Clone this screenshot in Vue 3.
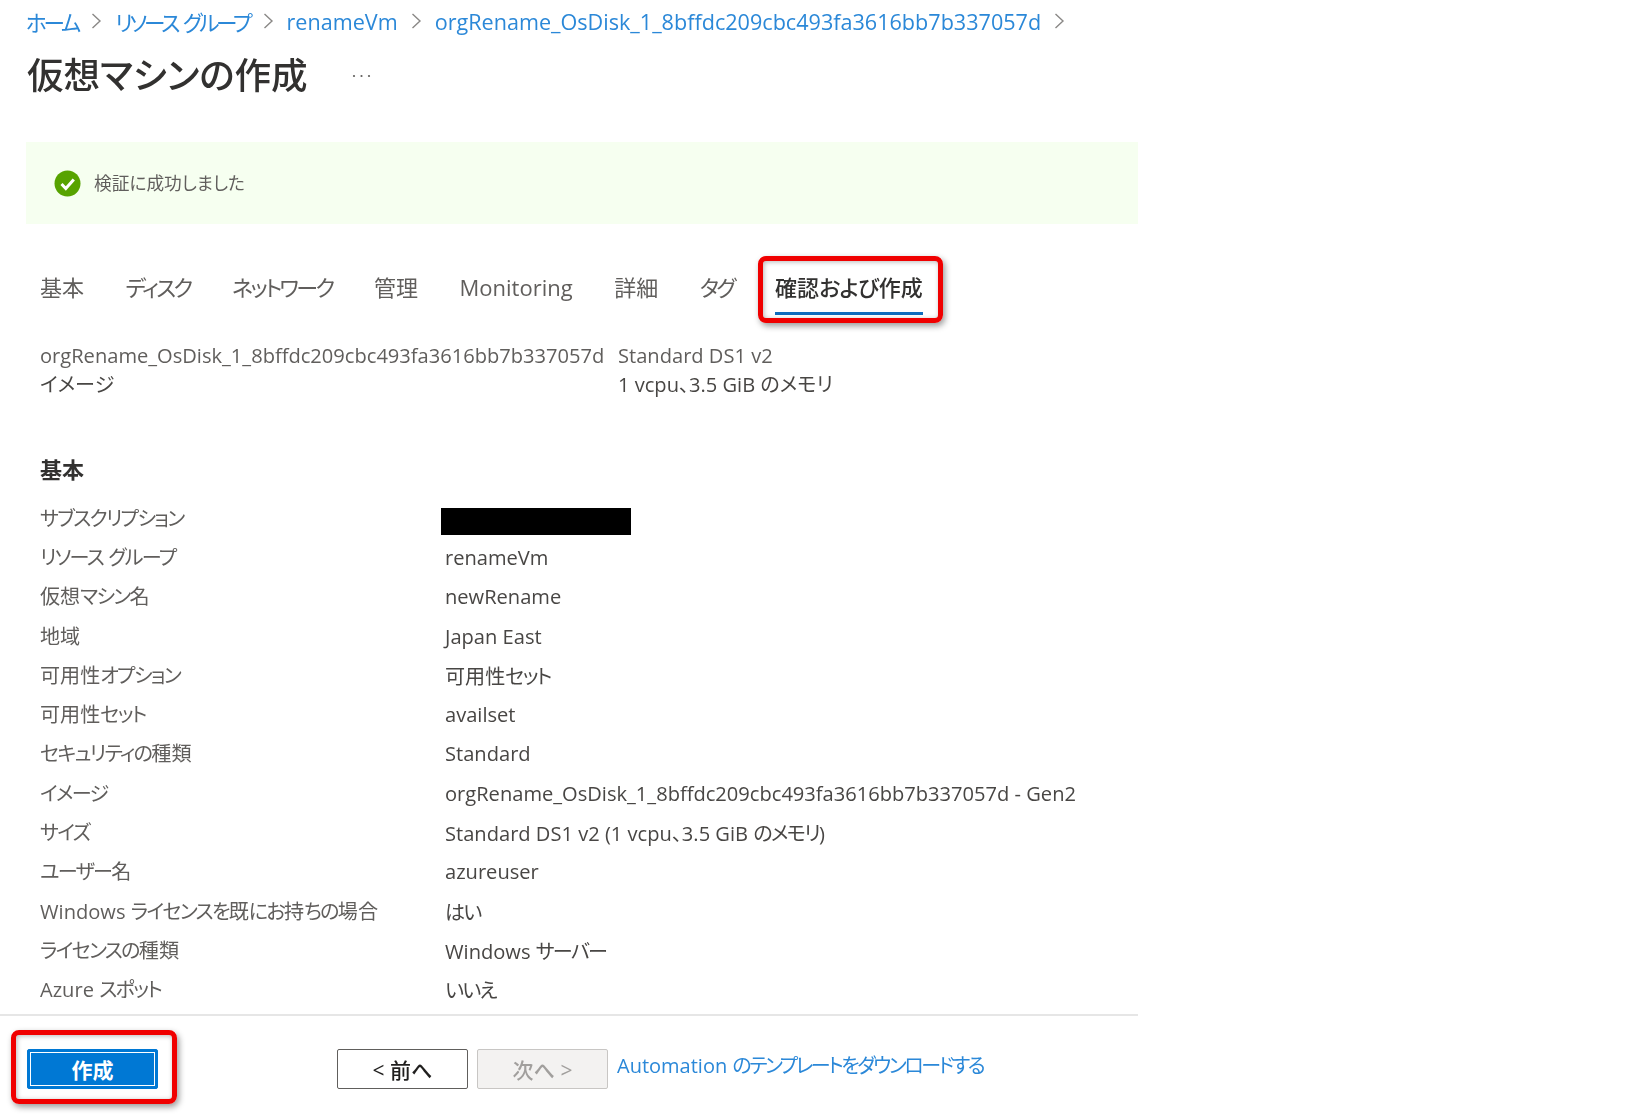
<template>
  <div class="page">
    <nav class="breadcrumb">
      <template v-for="crumb in crumbs" :key="crumb">
        <a class="crumb"><span v-for="r in runs(crumb)" :key="r.text" :class="{ kana: r.kana }">{{ r.text }}</span></a>
        <svg class="chevron" width="11" height="18" viewBox="0 0 11 18">
          <path d="M1.5 2 L9 9 L1.5 16" fill="none" stroke="#8a8886" stroke-width="1.4" />
        </svg>
      </template>
    </nav>

    <div class="title-row">
      <h1 class="title">仮想マシンの作成</h1>
      <svg class="more" width="19" height="4" viewBox="0 0 19 4">
        <circle cx="2" cy="2" r="1.1" fill="#605e5c" />
        <circle cx="9.5" cy="2" r="1.1" fill="#605e5c" />
        <circle cx="17" cy="2" r="1.1" fill="#605e5c" />
      </svg>
    </div>

    <div class="banner">
      <svg class="check" width="27" height="27" viewBox="0 0 27 27">
        <circle cx="13.5" cy="13.5" r="13" fill="#57a300" />
        <path d="M7.5 14 L11.8 18.5 L19.8 9.5" fill="none" stroke="#fff" stroke-width="3" />
      </svg>
      <span>検証に成功しました</span>
    </div>

    <div class="tabs">
      <div v-for="tab in tabs" :key="tab" class="tab" :class="{ active: tab === activeTab }">
        <span v-for="r in runs(tab)" :key="r.text" :class="{ kana: r.kana }">{{ r.text }}</span>
        <div v-if="tab === activeTab" class="callout tab-callout"></div>
      </div>
    </div>

    <div class="summary">
      <div class="summary-col first">
        <div class="muted">orgRename_OsDisk_1_8bffdc209cbc493fa3616bb7b337057d</div>
        <div>イメージ</div>
      </div>
      <div class="summary-col">
        <div class="muted">Standard DS1 v2</div>
        <div>1 vcpu、3.5 GiB のメモリ</div>
      </div>
    </div>

    <h2 class="section">基本</h2>

    <div class="details">
      <div v-for="row in rows" :key="row.label" class="row">
        <div class="label"><span v-for="r in runs(row.label)" :key="r.text" :class="{ kana: r.kana }">{{ r.text }}</span></div>
        <div v-if="row.value" class="value"><span v-for="r in runs(row.value)" :key="r.text" :class="{ kana: r.kana }">{{ r.text }}</span></div>
        <div v-else class="redacted"></div>
      </div>
    </div>

    <footer class="footer">
      <button class="btn primary">
        作成
        <div class="callout btn-callout"></div>
      </button>
      <button class="btn prev">&lt; 前へ</button>
      <button class="btn next">次へ &gt;</button>
      <a class="download"><span v-for="r in runs(downloadLabel)" :key="r.text" :class="{ kana: r.kana }">{{ r.text }}</span></a>
    </footer>
  </div>
</template>

<script setup>
const crumbs = ['ホーム', 'リソース グループ', 'renameVm', 'orgRename_OsDisk_1_8bffdc209cbc493fa3616bb7b337057d']
const tabs = ['基本', 'ディスク', 'ネットワーク', '管理', 'Monitoring', '詳細', 'タグ', '確認および作成']
const activeTab = '確認および作成'
const downloadLabel = 'Automation のテンプレートをダウンロードする'

const rows = [
  { label: 'サブスクリプション', value: '' },
  { label: 'リソース グループ', value: 'renameVm' },
  { label: '仮想マシン名', value: 'newRename' },
  { label: '地域', value: 'Japan East' },
  { label: '可用性オプション', value: '可用性セット' },
  { label: '可用性セット', value: 'availset' },
  { label: 'セキュリティの種類', value: 'Standard' },
  { label: 'イメージ', value: 'orgRename_OsDisk_1_8bffdc209cbc493fa3616bb7b337057d - Gen2' },
  { label: 'サイズ', value: 'Standard DS1 v2 (1 vcpu、3.5 GiB のメモリ)' },
  { label: 'ユーザー名', value: 'azureuser' },
  { label: 'Windows ライセンスを既にお持ちの場合', value: 'はい' },
  { label: 'ライセンスの種類', value: 'Windows サーバー' },
  { label: 'Azure スポット', value: 'いいえ' }
]

// kana runs are set tighter than the rest of the string
const runs = (text) =>
  text.split(/([\u3040-\u30ff]+)/).filter(Boolean).map((t) => ({
    text: t,
    kana: /^[\u3040-\u30ff]/.test(t)
  }))
</script>

<style>
html, body {
  background: #fff;
}
</style>

<style scoped>
.page {
  width: 1138px;
  height: 1114px;
  overflow: visible;
  font-family: "Open Sans", "Noto Sans CJK JP", sans-serif;
  font-feature-settings: "palt";
  font-size: 20.1px;
  color: #484644;
  filter: blur(0.35px);
}

.kana {
  letter-spacing: var(--kana, -0.085em);
}

.breadcrumb {
  --kana: -0.15em;
  display: flex;
  align-items: center;
  height: 42px;
  padding-left: 26px;
  gap: 13px;
  font-size: 21.6px;
}

.crumb {
  color: #2b88d8;
  white-space: nowrap;
}

.title-row {
  display: flex;
  align-items: center;
  height: 62px;
  padding-left: 27px;
}

.title {
  margin: 0;
  font-size: 36.6px;
  font-weight: 500;
  color: #323130;
  white-space: nowrap;
}

.more {
  margin-left: 44px;
  margin-top: 6px;
}

.banner {
  display: flex;
  align-items: center;
  gap: 13px;
  height: 82px;
  margin: 38px 0 0 26px;
  padding-left: 28px;
  background: #f6fff0;
  font-size: 17.7px;
  color: #605e5c;
}

.banner span {
  margin-top: -2px;
}

.tabs {
  --kana: -0.12em;
  display: flex;
  gap: 41.5px;
  margin-top: 38px;
  padding-left: 40px;
  height: 50px;
  font-size: 22px;
  color: #605e5c;
}

.tab {
  position: relative;
  white-space: nowrap;
  line-height: 50px;
}

.tab.active {
  --kana: -0.03em;
  color: #323130;
  font-weight: 500;
  border-bottom: 3px solid #0f6cbd;
  height: 50px;
}

.callout {
  position: absolute;
  border: 5px solid #f00000;
  border-radius: 8px;
  box-shadow: 2px 3px 6px rgba(0, 0, 0, 0.4), inset 1px 1px 5px rgba(0, 0, 0, 0.28);
  pointer-events: none;
}

.tab-callout {
  left: -17px;
  right: -20px;
  top: -6px;
  bottom: -11px;
}

.summary {
  display: flex;
  margin-top: 29px;
  padding-left: 40px;
  line-height: 29px;
}

.summary-col.first {
  width: 578px;
}

.muted {
  color: #605e5c;
}

.section {
  margin: 51px 0 0 40px;
  font-size: 22px;
  font-weight: 700;
  line-height: 38px;
  color: #323130;
}

.details {
  margin-top: 9.5px;
  display: grid;
  grid-auto-rows: 39.3px;
}

.row {
  display: grid;
  grid-template-columns: 445px 1fr;
  align-items: center;
}

.label {
  padding-left: 40px;
  color: #605e5c;
  white-space: nowrap;
}

.value {
  margin-top: 2px;
  color: #484644;
  white-space: nowrap;
}

.redacted {
  width: 190px;
  height: 27px;
  margin-left: -4px;
  margin-top: 8px;
  background: #000;
}

.footer {
  display: flex;
  align-items: flex-start;
  height: 60px;
  margin-top: 6px;
  padding: 33px 0 0 27px;
  border-top: 2px solid #e6e6e6;
}

.btn {
  width: 131px;
  height: 40px;
  box-sizing: border-box;
  border-radius: 2px;
  padding: 0;
  font-family: inherit;
  font-feature-settings: inherit;
  font-size: 21px;
  font-weight: 500;
  background: #fff;
}

.primary {
  position: relative;
  margin-right: 179px;
  background: #0078d4;
  border: 1px solid #0078d4;
  outline: 1px solid #fff;
  outline-offset: -4px;
  color: #fff;
  font-weight: 700;
}

.btn-callout {
  left: -17px;
  right: -20px;
  top: -20px;
  bottom: -16px;
}

.prev {
  border: 1.5px solid #605e5c;
  color: #201f1e;
}

.next {
  margin-left: 9px;
  background: #f3f2f1;
  border: 1.5px solid #c8c6c4;
  color: #a19f9d;
}

.download {
  --kana: -0.12em;
  margin-left: 9px;
  margin-top: 2px;
  font-size: 20px;
  line-height: 30px;
  color: #2b88d8;
  white-space: nowrap;
}
</style>
